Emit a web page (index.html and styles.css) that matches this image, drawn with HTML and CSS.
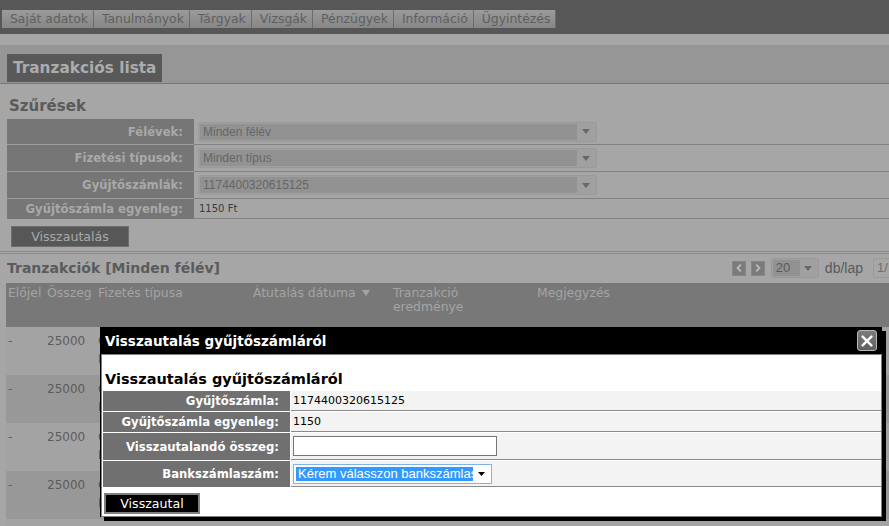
FILE: index.html
```html
<!DOCTYPE html>
<html lang="hu">
<head>
<meta charset="utf-8">
<title>Tranzakciós lista</title>
<link rel="stylesheet" href="styles.css">
</head>
<body>
<div class="page">
  <header class="topbar">
    <nav class="menu">
      <a class="tab">Saját adatok</a>
      <a class="tab">Tanulmányok</a>
      <a class="tab">Tárgyak</a>
      <a class="tab">Vizsgák</a>
      <a class="tab">Pénzügyek</a>
      <a class="tab">Információ</a>
      <a class="tab">Ügyintézés</a>
    </nav>
  </header>
  <div class="strip"></div>
  <div class="pagehead"><h1 class="pagetitle">Tranzakciós lista</h1></div>

  <main class="main">
    <h2 class="filters-title">Szűrések</h2>
    <div class="filters">
      <div class="flabel r1">Félévek:</div>
      <div class="fvalue r1">
        <div class="fsel"><span class="fsel-text">Minden félév</span><span class="fsel-arrow"><svg width="8" height="5" viewBox="0 0 8 5"><path d="M0 0H8L4 5Z" fill="#686868"/></svg></span></div>
      </div>
      <div class="flabel r2">Fizetési típusok:</div>
      <div class="fvalue r2">
        <div class="fsel"><span class="fsel-text">Minden típus</span><span class="fsel-arrow"><svg width="8" height="5" viewBox="0 0 8 5"><path d="M0 0H8L4 5Z" fill="#686868"/></svg></span></div>
      </div>
      <div class="flabel r2">Gyűjtőszámlák:</div>
      <div class="fvalue r2">
        <div class="fsel"><span class="fsel-text">1174400320615125</span><span class="fsel-arrow"><svg width="8" height="5" viewBox="0 0 8 5"><path d="M0 0H8L4 5Z" fill="#686868"/></svg></span></div>
      </div>
      <div class="flabel r4">Gyűjtőszámla egyenleg:</div>
      <div class="fvalue r4"><span class="fbalance">1150 Ft</span></div>
    </div>

    <div class="btnrow"><button class="btn-dark">Visszautalás</button></div>
    <div class="dline"></div>

    <div class="listhead">
      <h2 class="list-title">Tranzakciók [Minden félév]</h2>
      <div class="pager">
        <span class="pbtn"><svg width="6" height="8" viewBox="0 0 6 8"><path d="M4.8 0.6L1.6 4L4.8 7.4" stroke="#bdbdbd" stroke-width="1.8" fill="none"/></svg></span>
        <span class="pbtn"><svg width="6" height="8" viewBox="0 0 6 8"><path d="M1.2 0.6L4.4 4L1.2 7.4" stroke="#bdbdbd" stroke-width="1.8" fill="none"/></svg></span>
        <div class="psel"><span class="psel-text">20</span><span class="psel-arrow"><svg width="8" height="5" viewBox="0 0 8 5"><path d="M0 0H8L4 5Z" fill="#686868"/></svg></span></div>
        <span class="dblap">db/lap</span>
        <span class="pinput">1/</span>
      </div>
    </div>

    <table class="tx">
      <colgroup>
        <col class="c1"><col class="c2"><col class="c3"><col class="c4"><col class="c5"><col class="c6">
      </colgroup>
      <thead>
        <tr>
          <th>Előjel</th>
          <th>Összeg</th>
          <th>Fizetés típusa</th>
          <th>Átutalás dátuma <svg class="sort" width="8" height="6" viewBox="0 0 8 6"><path d="M0 0H8L4 6Z" fill="#a4a4a4"/></svg></th>
          <th>Tranzakció<br>eredménye</th>
          <th>Megjegyzés</th>
        </tr>
      </thead>
      <tbody>
        <tr class="odd"><td>-</td><td>25000</td><td>Csoportos<br>Befizetés</td><td></td><td></td><td></td></tr>
        <tr class="even"><td>-</td><td>25000</td><td>Csoportos<br>Befizetés</td><td></td><td></td><td></td></tr>
        <tr class="odd"><td>-</td><td>25000</td><td>Csoportos<br>Befizetés</td><td></td><td></td><td></td></tr>
        <tr class="even"><td>-</td><td>25000</td><td>Csoportos<br>Befizetés</td><td></td><td></td><td></td></tr>
        <tr class="odd"><td></td><td></td><td></td><td></td><td></td><td></td></tr>
      </tbody>
    </table>
  </main>
</div>

<div class="modal">
  <div class="modal-bar">
    <span class="modal-title">Visszautalás gyűjtőszámláról</span>
    <button class="modal-close"><svg width="12" height="12" viewBox="0 0 12 12"><path d="M1.6 1.6L10.4 10.4M10.4 1.6L1.6 10.4" stroke="#fff" stroke-width="2.4" stroke-linecap="round"/></svg></button>
  </div>
  <div class="modal-panel">
    <h3 class="modal-h">Visszautalás gyűjtőszámláról</h3>
    <div class="mgrid">
      <div class="mlabel">Gyűjtőszámla:</div>
      <div class="mvalue">1174400320615125</div>
      <div class="mlabel">Gyűjtőszámla egyenleg:</div>
      <div class="mvalue">1150</div>
      <div class="mlabel">Visszautalandó összeg:</div>
      <div class="mvalue"><span class="minput"></span></div>
      <div class="mlabel">Bankszámlaszám:</div>
      <div class="mvalue">
        <div class="msel"><span class="msel-text">Kérem válasszon bankszámlaszámot</span><span class="msel-arrow"><svg width="7" height="4" viewBox="0 0 7 4"><path d="M0 0H7L3.5 4Z" fill="#000"/></svg></span></div>
      </div>
    </div>
    <button class="mbtn">Visszautal</button>
  </div>
</div>
</body>
</html>
```

FILE: styles.css
```css
* { box-sizing: border-box; }
html, body { margin: 0; padding: 0; }
body {
  background: #a6a6a6;
  font-family: "DejaVu Sans", Verdana, sans-serif;
  overflow: hidden;
  width: 889px;
  height: 526px;
  position: relative;
}
.page { width: 930px; }

/* top menu */
.topbar { height: 34px; background: #575757; padding: 10px 0 0 2px; }
.menu { display: flex; height: 18px; }
.tab {
  display: block;
  height: 18px;
  line-height: 18px;
  font-size: 12.4px;
  color: #5f5f5f;
  padding: 0 5px 0 8px;
  background: linear-gradient(#9b9b9b, #8f8f8f 55%, #878787);
  border-right: 1px solid #6c6c6c;
  white-space: nowrap;
}
.strip { height: 11px; background: #a6a6a6; }
.pagehead {
  height: 39px;
  background: #969696;
  border-bottom: 1px solid #767676;
  padding: 9px 0 0 7px;
}
.pagetitle {
  margin: 0;
  display: inline-block;
  height: 28px;
  line-height: 28px;
  padding: 0 6px;
  background: #595959;
  color: #acacac;
  font-size: 15.3px;
  font-weight: bold;
}

/* main */
.main { padding-left: 6px; }
.filters-title {
  margin: 12px 0 3px 3px;
  font-size: 15px;
  line-height: 20px;
  font-weight: bold;
  color: #5b5b5b;
}
.filters {
  display: grid;
  grid-template-columns: 187px 1fr;
  grid-template-rows: 26px 27px 27px 20px;
  margin-left: 1px;
}
.flabel {
  background: #767676;
  color: #a9a9a9;
  font-weight: bold;
  font-size: 11.65px;
  display: flex;
  align-items: center;
  justify-content: flex-end;
  padding-right: 11px;
  border-bottom: 1px solid #9c9c9c;
}
.flabel.r4 { border-bottom-color: #767676; }
.fvalue {
  display: flex;
  align-items: center;
  padding-left: 4px;
  border-bottom: 1px solid #828282;
}
.fsel {
  width: 399px;
  height: 20px;
  border: 1px solid #9a9a9a;
  border-radius: 2px;
  padding: 1px;
  display: flex;
  background: #a0a0a0;
}
.fsel-text {
  width: 377px;
  background: #929292;
  font-family: "Liberation Sans", Arial, sans-serif;
  font-size: 12px;
  line-height: 16px;
  color: #666;
  padding-left: 3px;
  white-space: nowrap;
}
.fsel-arrow { flex: 1; display: flex; align-items: center; justify-content: center; }
.fbalance { font-size: 10px; color: #3a3a3a; padding-left: 1px; }

.btnrow { margin-top: 7px; padding-left: 5px; height: 21px; }
.btn-dark {
  display: block;
  width: 118px;
  height: 21px;
  padding: 0;
  background: #575757;
  border: 1px solid #6e6e6e;
  color: #a9a9a9;
  font-family: "DejaVu Sans", Verdana, sans-serif;
  font-size: 12.6px;
  line-height: 19px;
}
.dline {
  margin: 4px 0 0 -6px;
  height: 3px;
  border-top: 1px solid #8b8b8b;
  border-bottom: 1px solid #8b8b8b;
}

.listhead {
  margin-top: 3px;
  height: 22px;
  display: flex;
  align-items: center;
  padding-left: 1px;
}
.list-title {
  margin: 0;
  font-size: 14px;
  line-height: 20px;
  font-weight: bold;
  color: #5b5b5b;
}
.pager { margin-left: auto; margin-right: 17px; display: flex; align-items: center; }
.pbtn {
  width: 14px;
  height: 15px;
  background: #7b7b7b;
  border: 1px solid #868686;
  display: flex;
  align-items: center;
  justify-content: center;
  margin-right: 5px;
}
.psel {
  margin-left: 1px;
  width: 48px;
  height: 20px;
  border: 1px solid #999;
  border-radius: 2px;
  padding: 1px;
  display: flex;
  background: #a0a0a0;
}
.psel-text {
  width: 27px;
  background: #929292;
  font-family: "Liberation Sans", Arial, sans-serif;
  font-size: 13px;
  line-height: 16px;
  color: #5a5a5a;
  padding-left: 3px;
}
.psel-arrow { flex: 1; display: flex; align-items: center; justify-content: center; }
.dblap {
  margin-left: 6px;
  font-family: "Liberation Sans", Arial, sans-serif;
  font-size: 14px;
  color: #5a5a5a;
}
.pinput {
  margin-left: 10px;
  width: 40px;
  height: 20px;
  border: 1px solid #9a9a9a;
  border-radius: 2px;
  font-family: "Liberation Sans", Arial, sans-serif;
  font-size: 13px;
  line-height: 18px;
  color: #707070;
  padding-left: 3px;
}

/* transactions table */
.tx {
  margin-top: 4px;
  width: 924px;
  border-collapse: collapse;
  table-layout: fixed;
}
.c1 { width: 39px; }
.c2 { width: 51px; }
.c3 { width: 155px; }
.c4 { width: 140px; }
.c5 { width: 144px; }
.tx th {
  background: #787878;
  color: #a4a4a4;
  font-weight: normal;
  font-size: 12.4px;
  line-height: 14px;
  text-align: left;
  vertical-align: top;
  padding: 3px 0 0 2px;
  height: 44px;
  white-space: nowrap;
}
.sort { margin-left: 2px; vertical-align: 1px; }
.tx td {
  height: 48px;
  padding: 5px 0 0 2px;
  vertical-align: top;
  font-size: 12px;
  line-height: 18px;
  color: #5c5c5c;
  white-space: nowrap;
  overflow: hidden;
}
.tx tr.odd td { background: #a3a3a3; }
.tx tr.even td { background: #989898; }

/* modal */
.modal {
  position: absolute;
  left: 100px;
  top: 327px;
  width: 782px;
  height: 190px;
  background: #000;
  box-shadow: 4px 4px 0 #000;
}
.modal-bar {
  height: 27px;
  display: flex;
  align-items: center;
  justify-content: space-between;
  padding: 0 5px 0 5px;
}
.modal-title { color: #fff; font-weight: bold; font-size: 13.5px; }
.modal-close {
  width: 20px;
  height: 21px;
  padding: 0;
  border: 1px solid #b8b8b8;
  border-radius: 3px;
  background: linear-gradient(#7c7c7c, #5f5f5f);
  display: flex;
  align-items: center;
  justify-content: center;
}
.modal-panel {
  margin-left: 1px;
  width: 781px;
  height: 163px;
  border: 1px solid #808080;
  background: #fff;
  padding-top: 14px;
}
.modal-h {
  margin: 0 0 2px 3px;
  font-size: 14.5px;
  line-height: 20px;
  font-weight: bold;
  color: #000;
}
.mgrid {
  margin-left: 1px;
  display: grid;
  grid-template-columns: 187px 1fr;
  grid-template-rows: 20px 20px 27px 26px;
  column-gap: 1px;
  row-gap: 1px;
}
.mlabel {
  background: #707070;
  color: #fff;
  font-weight: bold;
  font-size: 11.65px;
  display: flex;
  align-items: center;
  justify-content: flex-end;
  padding-right: 11px;
}
.mvalue {
  background: #f3f3f3;
  border-bottom: 1px solid #8a8a8a;
  display: flex;
  align-items: center;
  padding-left: 2px;
  font-size: 11px;
  color: #000;
}
.minput {
  display: block;
  width: 204px;
  height: 20px;
  border: 1px solid #767676;
  background: #fff;
}
.msel {
  width: 199px;
  height: 20px;
  border: 1px solid #7eb4ea;
  background: #fff;
  display: flex;
  align-items: center;
  padding: 2px;
}
.msel-text {
  width: 177px;
  height: 14px;
  background: #3399ff;
  color: #fff;
  font-family: "Liberation Sans", Arial, sans-serif;
  font-size: 13px;
  line-height: 14px;
  padding-left: 2px;
  overflow: hidden;
  white-space: nowrap;
}
.msel-arrow { flex: 1; display: flex; align-items: center; justify-content: center; }
.mbtn {
  display: block;
  margin: 6px 0 0 2px;
  width: 96px;
  height: 21px;
  padding: 0;
  background: #000;
  border: 2px solid #808080;
  color: #fff;
  font-family: "DejaVu Sans", Verdana, sans-serif;
  font-size: 12.6px;
  line-height: 17px;
}
```
